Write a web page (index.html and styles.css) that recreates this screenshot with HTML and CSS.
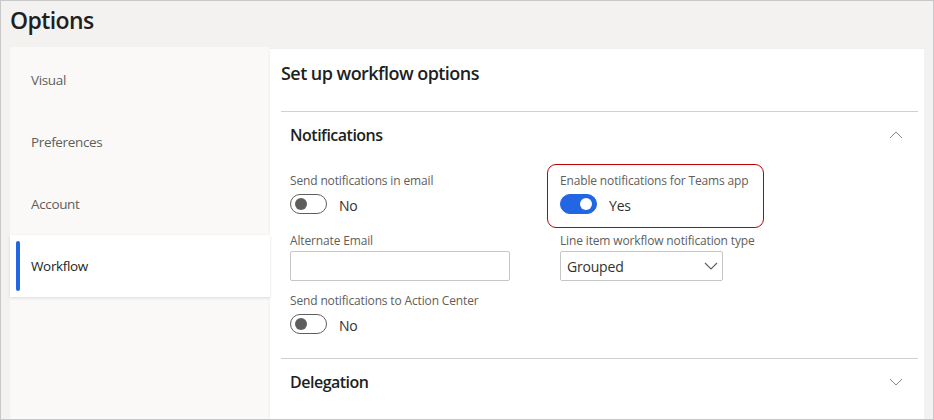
FILE: index.html
```html
<!DOCTYPE html>
<html lang="en">
<head>
<meta charset="utf-8">
<title>Options</title>
<link rel="stylesheet" href="styles.css">
</head>
<body>
<div class="frame">
  <h1 class="page-title">Options</h1>
  <div class="layout">
    <nav class="nav">
      <div class="nav-item">Visual</div>
      <div class="nav-item">Preferences</div>
      <div class="nav-item">Account</div>
      <div class="nav-item active">Workflow</div>
    </nav>
    <main class="main">
      <h2 class="main-title">Set up workflow options</h2>
      <section class="section">
        <div class="section-header">
          <span class="section-title">Notifications</span>
          <svg class="chev" width="14" height="8" viewBox="0 0 14 8"><polyline points="1,7 7,1 13,7" fill="none" stroke="#8a8886" stroke-width="1"/></svg>
        </div>
        <div class="fields">
          <div class="field">
            <div class="field-label">Send notifications in email</div>
            <div class="toggle-row"><span class="toggle"><span class="knob"></span></span><span class="toggle-text">No</span></div>
          </div>
          <div class="field highlighted">
            <div class="field-label">Enable notifications for Teams app</div>
            <div class="toggle-row"><span class="toggle on"><span class="knob"></span></span><span class="toggle-text">Yes</span></div>
          </div>
          <div class="field">
            <div class="field-label">Alternate Email</div>
            <div class="input"></div>
          </div>
          <div class="field">
            <div class="field-label">Line item workflow notification type</div>
            <div class="select"><span>Grouped</span>
              <svg width="14" height="8" viewBox="0 0 14 8"><polyline points="1,1 7,7 13,1" fill="none" stroke="#605e5c" stroke-width="1.1"/></svg>
            </div>
          </div>
          <div class="field">
            <div class="field-label">Send notifications to Action Center</div>
            <div class="toggle-row"><span class="toggle"><span class="knob"></span></span><span class="toggle-text">No</span></div>
          </div>
        </div>
      </section>
      <section class="section">
        <div class="section-header">
          <span class="section-title">Delegation</span>
          <svg class="chev" width="14" height="8" viewBox="0 0 14 8"><polyline points="1,1 7,7 13,1" fill="none" stroke="#8a8886" stroke-width="1"/></svg>
        </div>
      </section>
    </main>
  </div>
</div>
</body>
</html>
```
FILE: styles.css
```css
* { box-sizing: border-box; }
html, body { margin: 0; padding: 0; }
body {
  font-family: "Open Sans", "Noto Sans", sans-serif;
  color: #323130;
}
.frame {
  width: 934px;
  height: 420px;
  border: 1px solid #c8c8c8;
  background: #f3f2f1;
  overflow: hidden;
  display: flex;
  flex-direction: column;
}
.page-title {
  margin: 0;
  padding: 3px 9px 11px;
  font-size: 23px;
  line-height: 32px;
  font-weight: 600;
  color: #201f1e;
  letter-spacing: -0.6px;
}
.layout {
  flex: 1;
  display: flex;
  padding: 0 9px;
  min-height: 0;
}
.nav {
  width: 260px;
  background: #faf9f8;
  padding-top: 2px;
}
.nav-item {
  height: 62px;
  display: flex;
  align-items: center;
  padding-left: 21px;
  font-size: 13.5px;
  color: #605e5c;
  letter-spacing: -0.35px;
}
.nav-item.active {
  position: relative;
  background: #fff;
  color: #201f1e;
  box-shadow: 0 1px 3px rgba(0,0,0,0.12);
}
.nav-item.active::before {
  content: "";
  position: absolute;
  left: 6px;
  top: 6px;
  bottom: 6px;
  width: 4px;
  border-radius: 2px;
  background: #2266e3;
}
.main {
  flex: 1;
  background: #fff;
  margin-top: 2px;
  padding: 0 6px 0 11px;
  box-shadow: -1px 0 2px rgba(0,0,0,0.04);
}
.main-title {
  margin: 0;
  padding: 12px 0 26px;
  font-size: 18px;
  line-height: 24px;
  font-weight: 600;
  color: #201f1e;
  letter-spacing: -0.55px;
}
.section {
  border-top: 1px solid #d2d0ce;
  padding-bottom: 5px;
}
.section-header {
  height: 46px;
  display: flex;
  align-items: center;
  justify-content: space-between;
  padding: 0 15px 0 9px;
}
.section-title {
  font-size: 16px;
  font-weight: 600;
  color: #201f1e;
  letter-spacing: -0.5px;
}
.fields {
  display: grid;
  grid-template-columns: 270px 270px;
  grid-auto-rows: 60px;
  padding-left: 9px;
  margin-top: 15px;
}
.field { position: relative; }
.field-label {
  font-size: 12px;
  line-height: 16px;
  color: #605e5c;
  letter-spacing: -0.15px;
}
.toggle-row {
  height: 30px;
  display: flex;
  align-items: center;
  gap: 12px;
}
.toggle {
  width: 37px;
  height: 20px;
  border: 1px solid #605e5c;
  border-radius: 10px;
  display: flex;
  align-items: center;
  padding: 0 4px;
}
.knob {
  width: 12px;
  height: 12px;
  border-radius: 50%;
  background: #605e5c;
}
.toggle.on {
  background: #2266e3;
  border-color: #2266e3;
  justify-content: flex-end;
}
.toggle.on .knob { background: #fff; }
.toggle-text {
  font-size: 14px;
  color: #323130;
  letter-spacing: -0.2px;
  padding-top: 2px;
}
.input {
  margin-top: 2px;
  width: 220px;
  height: 30px;
  border: 1px solid #c8c6c4;
  border-radius: 2px;
}
.select {
  margin-top: 2px;
  width: 163px;
  height: 30px;
  border: 1px solid #c8c6c4;
  border-radius: 2px;
  display: flex;
  align-items: center;
  justify-content: space-between;
  padding: 0 4px 0 6px;
  font-size: 14px;
  color: #323130;
  letter-spacing: -0.2px;
}
.highlighted::after {
  content: "";
  position: absolute;
  left: -13px;
  top: -9px;
  width: 215px;
  height: 62px;
  border: 1px solid #c00000;
  border-radius: 9px;
}
```
